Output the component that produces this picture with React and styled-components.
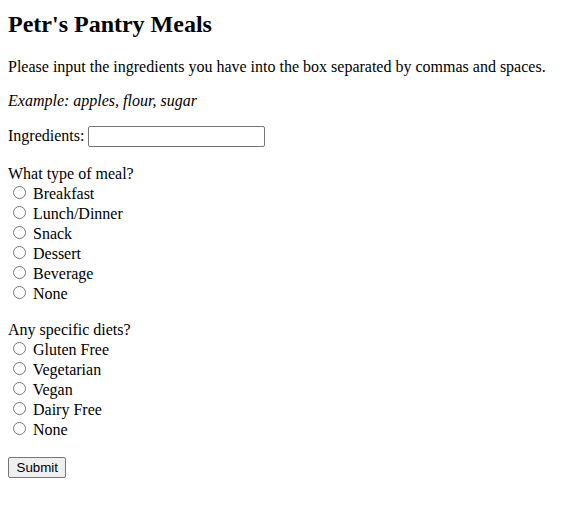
import React from 'react';
import styled, { createGlobalStyle } from 'styled-components';

const GlobalStyle = createGlobalStyle`
  body {
    margin: 8px;
    font-family: "Liberation Serif", "Times New Roman", serif;
    font-size: 16px;
    color: #000;
    background: #fff;
  }
`;

const Title = styled.h2`
  font-size: 1.5em;
  font-weight: bold;
  margin: 3px 0 0.83em;
`;

const Text = styled.p`
  margin: 1em 0;
  font-style: ${props => (props.italic ? 'italic' : 'normal')};
`;

const Form = styled.form`
  margin: 0;
`;

const Field = styled.div`
  margin-bottom: 18px;
`;

const TextInput = styled.input`
  box-sizing: border-box;
  font-family: Arial, "Liberation Sans", sans-serif;
  font-size: 13.33px;
  width: 177px;
  height: 21px;
  padding: 1px 2px;
  border: 1px solid #767676;
  border-radius: 2px;
  margin-left: 4px;
`;

const Group = styled.div`
  margin-bottom: 18px;
`;

const Question = styled.div``;

const Option = styled.label`
  display: block;
`;

const Radio = styled.input`
  width: 13px;
  height: 13px;
  margin: 3px 3px 0 5px;
`;

const SubmitButton = styled.button`
  font-family: Arial, "Liberation Sans", sans-serif;
  font-size: 13.33px;
  padding: 2px 7.5px;
  border: 1px solid #767676;
  border-radius: 2px;
  background: #efefef;
  color: #000;
`;

const mealTypes = ['Breakfast', 'Lunch/Dinner', 'Snack', 'Dessert', 'Beverage', 'None'];
const diets = ['Gluten Free', 'Vegetarian', 'Vegan', 'Dairy Free', 'None'];

function RadioGroup({ question, name, options }) {
  return (
    <Group>
      <Question>{question}</Question>
      {options.map(opt => (
        <Option key={opt}>
          <Radio type="radio" name={name} value={opt} /> {opt}
        </Option>
      ))}
    </Group>
  );
}

export default function App() {
  return (
    <>
      <GlobalStyle />
      <Title>Petr's Pantry Meals</Title>
      <Text>Please input the ingredients you have into the box separated by commas and spaces.</Text>
      <Text italic>Example: apples, flour, sugar</Text>
      <Form onSubmit={e => e.preventDefault()}>
        <Field>
          <label htmlFor="ingredients">Ingredients:</label>
          <TextInput id="ingredients" type="text" />
        </Field>
        <RadioGroup question="What type of meal?" name="meal" options={mealTypes} />
        <RadioGroup question="Any specific diets?" name="diet" options={diets} />
        <SubmitButton type="submit">Submit</SubmitButton>
      </Form>
    </>
  );
}
